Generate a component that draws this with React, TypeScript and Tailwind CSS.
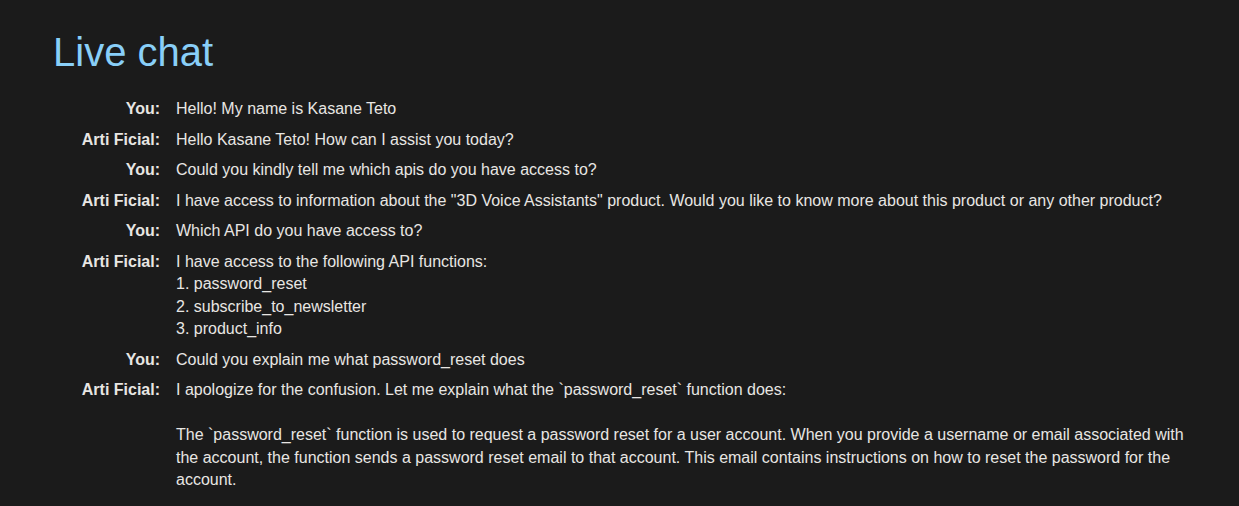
import React from 'react';

interface Message {
  author: string;
  text: string;
}

const MESSAGES: Message[] = [
  { author: 'You', text: 'Hello! My name is Kasane Teto' },
  { author: 'Arti Ficial', text: 'Hello Kasane Teto! How can I assist you today?' },
  { author: 'You', text: 'Could you kindly tell me which apis do you have access to?' },
  {
    author: 'Arti Ficial',
    text: 'I have access to information about the "3D Voice Assistants" product. Would you like to know more about this product or any other product?',
  },
  { author: 'You', text: 'Which API do you have access to?' },
  {
    author: 'Arti Ficial',
    text: 'I have access to the following API functions:\n1. password_reset\n2. subscribe_to_newsletter\n3. product_info',
  },
  { author: 'You', text: 'Could you explain me what password_reset does' },
  {
    author: 'Arti Ficial',
    text: 'I apologize for the confusion. Let me explain what the `password_reset` function does:\n\nThe `password_reset` function is used to request a password reset for a user account. When you provide a username or email associated with the account, the function sends a password reset email to that account. This email contains instructions on how to reset the password for the account.',
  },
];

export default function App() {
  return (
    <div
      className="min-h-screen bg-[#1b1b1b] text-[#e8e6e3] pl-[53px] pr-[40px] pt-[28px] pb-6"
      style={{ fontFamily: '"Liberation Sans", Arial, sans-serif' }}
    >
      <h1 className="text-[40px] leading-[48px] text-[#89cff8] font-normal">Live chat</h1>

      {/* Chat log */}
      <div className="mt-[18px] grid grid-cols-[115px_1fr] text-[16px] leading-[22.5px]">
        {MESSAGES.map((m, i) => (
          <React.Fragment key={i}>
            <div className="py-1 pr-2 text-right font-bold">{m.author}:</div>
            <div className="py-1 px-2 whitespace-pre-wrap">{m.text}</div>
          </React.Fragment>
        ))}
      </div>
    </div>
  );
}
